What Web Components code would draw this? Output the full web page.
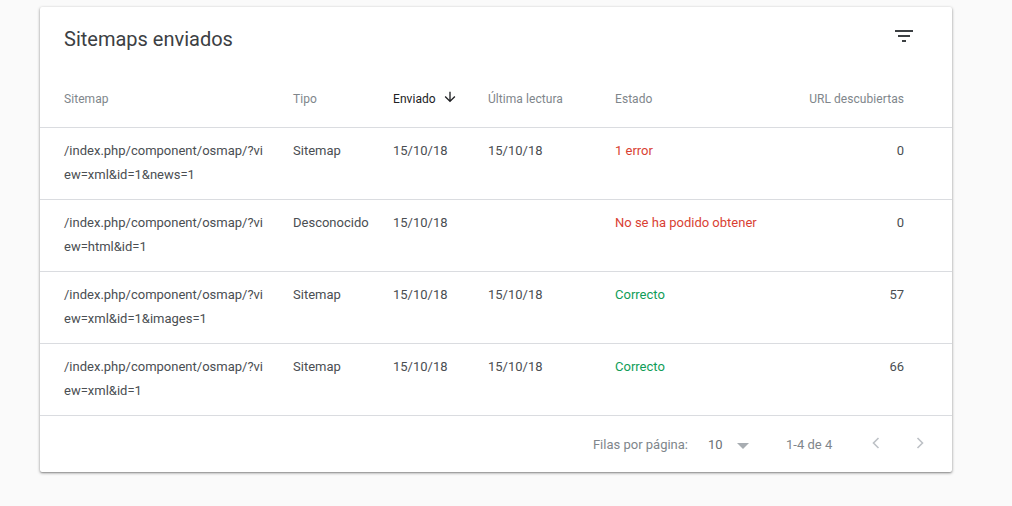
<!DOCTYPE html>
<html lang="es">
<head>
<meta charset="utf-8">
<title>Sitemaps enviados</title>
<style>
  html, body { margin: 0; height: 506px; overflow: hidden; background: #fafafa; font-family: Roboto, "Liberation Sans", sans-serif; }
  body { padding: 7px 60px 0 40px; box-sizing: border-box; }
</style>
</head>
<body>
<sitemap-card>
  <span slot="title">Sitemaps enviados</span>
  <sitemap-head></sitemap-head>
  <sitemap-row path="/index.php/component/osmap/?view=xml&amp;id=1&amp;news=1" kind="Sitemap" sent="15/10/18" read="15/10/18" state="1 error" tone="bad" urls="0"></sitemap-row>
  <sitemap-row path="/index.php/component/osmap/?view=html&amp;id=1" kind="Desconocido" sent="15/10/18" read="" state="No se ha podido obtener" tone="bad" urls="0"></sitemap-row>
  <sitemap-row path="/index.php/component/osmap/?view=xml&amp;id=1&amp;images=1" kind="Sitemap" sent="15/10/18" read="15/10/18" state="Correcto" tone="good" urls="57"></sitemap-row>
  <sitemap-row path="/index.php/component/osmap/?view=xml&amp;id=1" kind="Sitemap" sent="15/10/18" read="15/10/18" state="Correcto" tone="good" urls="66"></sitemap-row>
  <sitemap-pager slot="footer"></sitemap-pager>
</sitemap-card>

<script>
const COLUMNS = 'grid-template-columns: 229px 100px 95px 127px 1fr; padding: 0 48px 0 24px;';

class SitemapCard extends HTMLElement {
  constructor() {
    super();
    this.attachShadow({ mode: 'open' });
    this.shadowRoot.innerHTML = `
      <style>
        :host {
          display: block;
          width: 912px;
          height: 465px;
          background: #fff;
          border-radius: 2px;
          box-shadow: 0 1px 3px rgba(0,0,0,.45), 0 1px 1px rgba(0,0,0,.1);
        }
        .title {
          display: flex;
          justify-content: space-between;
          height: 64px;
          padding: 0 36px 0 24px;
          font-size: 20px;
          line-height: 64px;
          color: #3c4043;
        }
        svg { display: block; margin-top: 17px; }
      </style>
      <div class="title">
        <slot name="title"></slot>
        <svg width="24" height="24" viewBox="0 0 24 24" fill="#3c4043"><path d="M10 18h4v-2h-4v2zM3 6v2h18V6H3zm3 7h12v-2H6v2z"/></svg>
      </div>
      <slot></slot>
      <slot name="footer"></slot>
    `;
  }
}

class SitemapHead extends HTMLElement {
  constructor() {
    super();
    this.attachShadow({ mode: 'open' });
    this.shadowRoot.innerHTML = `
      <style>
        :host {
          display: grid;
          ${COLUMNS}
          height: 56px;
          align-items: center;
          border-bottom: 1px solid #dadce0;
          font-size: 12px;
          letter-spacing: .06px;
          color: #80868b;
        }
        .sorted { display: flex; align-items: center; gap: 6px; color: #202124; }
        .split { display: flex; justify-content: space-between; }
        svg { display: block; margin-top: -4px; }
      </style>
      <div>Sitemap</div>
      <div>Tipo</div>
      <div class="sorted">Enviado
        <svg width="16" height="16" viewBox="0 0 24 24" fill="#202124"><path d="M20 12l-1.41-1.41L13 16.17V4h-2v12.17l-5.58-5.59L4 12l8 8 8-8z"/></svg>
      </div>
      <div>Última lectura</div>
      <div class="split"><span>Estado</span><span>URL descubiertas</span></div>
    `;
  }
}

class SitemapRow extends HTMLElement {
  constructor() {
    super();
    this.attachShadow({ mode: 'open' });
  }

  connectedCallback() {
    const get = (name) => this.getAttribute(name) || '';
    this.shadowRoot.innerHTML = `
      <style>
        :host {
          display: grid;
          ${COLUMNS}
          height: 60px;
          padding-top: 11px;
          border-bottom: 1px solid #dadce0;
          font-size: 13px;
          line-height: 24px;
          color: #4a4e52;
        }
        .path { width: 205px; word-break: break-all; }
        .state { display: flex; justify-content: space-between; }
        .bad { color: #d93f33; }
        .good { color: #0f9d58; }
      </style>
      <div class="path"></div>
      <div class="kind"></div>
      <div class="sent"></div>
      <div class="read"></div>
      <div class="state"><span class="${get('tone')}"></span><span class="urls"></span></div>
    `;
    const root = this.shadowRoot;
    root.querySelector('.path').textContent = get('path');
    root.querySelector('.kind').textContent = get('kind');
    root.querySelector('.sent').textContent = get('sent');
    root.querySelector('.read').textContent = get('read');
    root.querySelector('.' + get('tone')).textContent = get('state');
    root.querySelector('.urls').textContent = get('urls');
  }
}

class SitemapPager extends HTMLElement {
  constructor() {
    super();
    this.attachShadow({ mode: 'open' });
    this.shadowRoot.innerHTML = `
      <style>
        :host {
          display: flex;
          align-items: center;
          justify-content: flex-end;
          height: 56px;
          padding-right: 20px;
          font-size: 13px;
          color: #80868b;
        }
        .size { margin-left: 20px; width: 29px; color: #6b7075; }
        .caret { width: 0; height: 0; border: 6px solid transparent; border-top-color: #a8adb2; border-bottom: 0; margin-top: 4px; }
        .range { margin-left: 37px; width: 78px; }
        svg { display: block; margin-top: -3px; }
        .next { margin-left: 20px; }
      </style>
      <span>Filas por página:</span>
      <span class="size">10</span>
      <span class="caret"></span>
      <span class="range">1-4 de 4</span>
      <svg width="24" height="24" viewBox="0 0 24 24" fill="none" stroke="#bdc1c6" stroke-width="1.6"><path d="M14.5 7l-5 5 5 5"/></svg>
      <svg class="next" width="24" height="24" viewBox="0 0 24 24" fill="none" stroke="#bdc1c6" stroke-width="1.6"><path d="M9.5 7l5 5-5 5"/></svg>
    `;
  }
}

customElements.define('sitemap-card', SitemapCard);
customElements.define('sitemap-head', SitemapHead);
customElements.define('sitemap-row', SitemapRow);
customElements.define('sitemap-pager', SitemapPager);
</script>
</body>
</html>
